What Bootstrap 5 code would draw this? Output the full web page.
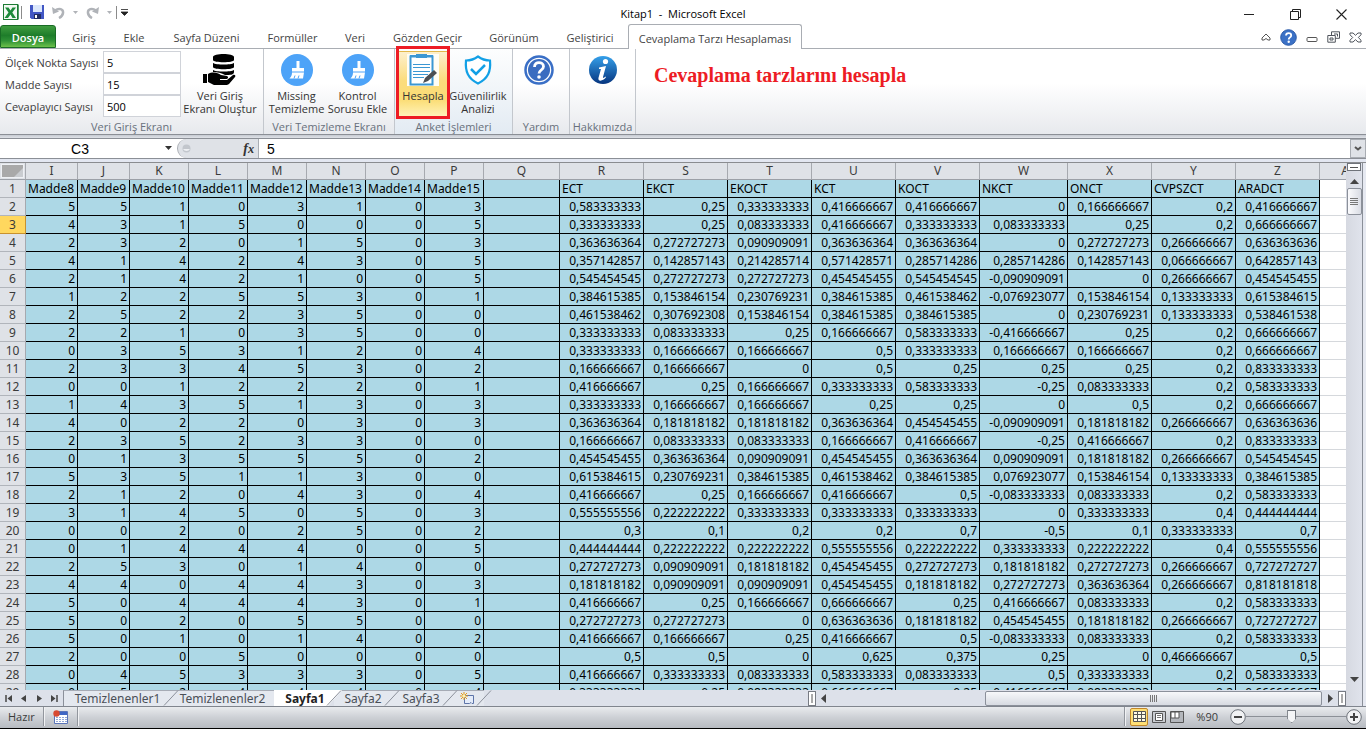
<!DOCTYPE html>
<html lang="tr">
<head>
<meta charset="utf-8">
<meta name="viewport" content="width=device-width, initial-scale=1">
<title>Kitap1 - Microsoft Excel</title>
<link href="https://cdn.jsdelivr.net/npm/bootstrap@5.3.0/dist/css/bootstrap.min.css" rel="stylesheet">
<style>
  body { font-family: "Open Sans", "Noto Sans", sans-serif; font-size: 11px; line-height: 13px; color: #3c3c3c; background: #fff; }
  button { border: 0; background: none; padding: 0; color: inherit; font: inherit; white-space: nowrap; }
  svg { display: block; flex: none; }
  input { min-width: 0; }

  .title-bar { height: 24px; padding-left: 3px; }
  .title-text { font-size: 11px; padding-top: 2px; color: #000; white-space: pre; }
  .window-buttons { padding-right: 19px; padding-top: 4px; gap: 35px; }
  .vline { width: 1px; height: 13px; background: #8b8b8b; }

  .ribbon-tabs { height: 25px; border-bottom: 1px solid #a9adb3; }
  .ribbon-tabs .tab { height: 24px; padding-top: 2px; color: #444; text-align: center; }
  .ribbon-tabs .tab-file { width: 56px; margin-right: 3px; height: 23px; align-self: flex-end; color: #fff; font-weight: 600;
    background: linear-gradient(#3f9c3f, #1e7d2a 45%, #2f9136 70%, #6cc04a); border: 1px solid #196b25; border-radius: 3px 3px 0 0; }
  .w-1 { width: 50px; } .w-2 { width: 50px; } .w-3 { width: 95px; } .w-4 { width: 77px; } .w-5 { width: 48px; }
  .w-6 { width: 97px; } .w-7 { width: 76px; } .w-8 { width: 76px; }
  .ribbon-tabs .tab-active { width: 174px; height: 25px; margin-bottom: -1px; background: #fff; border: 1px solid #a9adb3; border-bottom: 0; border-radius: 3px 3px 0 0; }
  .tab-tools { gap: 9px; padding-right: 4px; padding-top: 2px; }

  .ribbon { height: 86px; background: linear-gradient(#fff 0, #fff 40%, #e7e9ed 100%); border-bottom: 1px solid #8b8f96; }
  .group { border-right: 1px solid #c3c7cd; padding-top: 2px; }
  .group-1 { width: 264px; } .group-2 { width: 131px; } .group-3 { width: 118px; background: linear-gradient(#fdfefe, #e3ebf3); }
  .group-4 { width: 57px; } .group-5 { width: 66px; }
  .group-4 .big-button { padding-right: 4px; }
  .group-2 .buttons { padding-left: 2px; }
  .group-3 .buttons { padding-left: 2px; }
  .group-label { color: #68707c; text-align: center; height: 14px; white-space: nowrap; }
  .field-label { width: 98px; margin-left: 5px; white-space: nowrap; }
  .field-box { width: 78px; height: 22px; border: 1px solid #d0d3d9; border-radius: 0; padding: 0 3px; background: #fff; color: #000; font-size: 11px; }
  .big-button { display: flex; flex-direction: column; align-items: center; gap: 3px; padding-top: 3px; height: 66px; min-width: 0; color: #333; }
  .big-button .cap { display: block; }
  .bw-1 { width: 78px; } .bw-2 { width: 61px; } .bw-3 { width: 52px; } .bw-4 { width: 58px; }
  .hot { background: linear-gradient(#fdf0cd, #fbdc7c 45%, #fbdd76 75%, #fff3b8); border: 1px solid #e2b84b; border-radius: 2px; padding-top: 2px; }
  .callout { position: absolute; left: 1px; top: -3px; width: 54px; height: 73px; border: 3px solid #ed1c24; pointer-events: none; }
  .note { font-family: "Liberation Serif", serif; font-weight: bold; font-size: 20px; line-height: 24px; color: #ed1c24; padding: 14px 0 0 18px; }

  .strip { height: 4px; background: linear-gradient(#c6cad1, #dfe2e8); border-bottom: 1px solid #8b8f96; }
  .formula-bar { height: 20px; border-bottom: 1px solid #8b8f96; background: #fff; font-family: "Liberation Sans", sans-serif; font-size: 14px; }
  .formula-bar input { border: 0; padding: 0; color: #000; font-size: 14px; line-height: 18px; background: transparent; }
  .name-box { width: 160px; text-align: center; }
  .fx-area { width: 82px; background: #dfe2e7; border: 1px solid #a9adb3; border-width: 0 1px 0 1px; border-radius: 10px 0 0 10px; }
  .fx { font-family: "Liberation Serif", serif; font-style: italic; font-weight: bold; font-size: 14px; color: #333; }
  .expand { width: 16px; background: #dfe2e7; border: 1px solid #a9adb3; }
  .strip-2 { height: 4px; background: #e3e7f1; border-bottom: 1px solid #8a8c90; }

  .sheet { background: #fff; }
  .grid-table { table-layout: fixed; border-collapse: separate; border-spacing: 0; width: 1379px; font-family: "Noto Sans", sans-serif; font-size: 12px; line-height: 17px; color: #000; }
  .grid-table th { font-weight: normal; background: #dfe2e7; color: #3a3a3a; text-align: center; padding: 0; height: 18px; border-right: 1px solid #a6a9af; border-bottom: 1px solid #b1b5bb; }
  .grid-table thead th { height: 17px; line-height: 16px; border-bottom: 1px solid #9ca0a7; }
  .grid-table td { height: 18px; padding: 0 2px; text-align: right; white-space: nowrap; background: #add8e6; border-right: 1px solid #000; border-bottom: 1px solid #000; }
  .grid-table .heads td { text-align: left; }
  .grid-table td.blank { background: #fff; border-color: #d5d8dc; }
  .grid-table th.current { background: #ffd75e; border-color: #c8912d; }
  .corner { display: flex; justify-content: flex-end; align-items: flex-end; margin: 1px; height: 14px; background: #a9a9a9; border: 1px solid #eef0f4; }
  .c-head { width: 26px; } .c-52 { width: 52px; } .c-59 { width: 59px; } .c-76 { width: 76px; } .c-84 { width: 84px; } .c-88 { width: 88px; }

  .v-scroll { width: 17px; background: linear-gradient(90deg, #d6d9e1, #e0e3ec); border-right: 1px solid #8a8f98; margin-right: 3px; }
  .side { background: #e6e9f1; }
  .split-box { width: 14px; height: 8px; border: 1px solid #6f737a; background: #fff; }
  .v-thumb { width: 15px; height: 27px; border: 1px solid #8b909a; border-radius: 2px; background: linear-gradient(90deg, #fbfbfd, #d9dce4); }

  .bottom-bar { height: 16px; background: #dde1ea; }
  .sheet-nav { width: 63px; padding: 0 5px; }
  .sheet-tabs button { height: 16px; background: #e4e8ef; line-height: 15px; color: #4a4f57; font-size: 12px; font-family: "Noto Sans", sans-serif; border-top: 1px solid #a6abb5; text-align: center; }
  .sheet-tabs .slash { margin: 0 -8px; position: relative; }
  .st-1 { width: 108px; border-left: 1px solid #8b909a; } .st-2 { width: 103px; } .st-3 { width: 58px; } .st-4 { width: 34px; }
  .sheet-tabs .st-on { width: 68px; margin-right: -8px; padding-right: 6px; background: #fff; border-top-color: #fff; font-weight: bold; color: #222; clip-path: polygon(0 0, 100% 0, calc(100% - 14px) 100%, 0 100%); }
  .h-scroll { width: 538px; }
  .grip { width: 8px; height: 15px; background: #fff; border: 1px solid #777b83; }
  .h-thumb { height: 15px; width: 337px; border: 1px solid #8b909a; border-radius: 2px; background: linear-gradient(#f7f8fa, #d7dbe2); }

  .status { height: 23px; padding-bottom: 2px; border-top: 1px solid #80858e; border-bottom: 1px solid #000; background: linear-gradient(#e9ebee, #cdd0d5 50%, #b7bbc1); }
  .status .sep { width: 2px; align-self: stretch; background: #92969d; border-right: 1px solid #f1f2f4; }
  .view-on { width: 18px; height: 18px; border: 1px solid #c2872a; border-radius: 2px; background: #fedf75; }
  .zoom-range { appearance: none; width: 100px; height: 16px; margin: 0; background: linear-gradient(#8c9097, #8c9097) center / 100% 1px no-repeat; }
  .zoom-range::-webkit-slider-thumb { appearance: none; width: 9px; height: 13px; background: #6f747c; clip-path: polygon(0 0, 100% 0, 100% 65%, 50% 100%, 0 65%); box-shadow: inset 0 0 0 1px #6f747c, inset 0 0 0 8px #f4f5f7; }
</style>
</head>
<body>
<div class="d-flex flex-column vh-100 overflow-hidden">

  <header class="title-bar d-flex flex-shrink-0 align-items-center position-relative">
    <svg width="18" height="18" viewBox="0 0 18 18"><rect x=".5" y="1.5" width="14" height="15" fill="#f3faf3" stroke="#1d7c34"/><path d="M2 4.500h3.500l2 3 2-3H13L9.300 9.500l3.700 5.500H9.500l-2-3.500L5 15H1.500L5.500 9.500z" fill="#1e8b3b"/><path d="M15 1.500v15" stroke="#1d7c34" stroke-width="1.500"/></svg>
    <span class="vline"></span>
    <button class="ms-2" aria-label="Kaydet"><svg width="14" height="14" viewBox="0 0 14 14"><path d="M0 0h14v14H1.500L0 12.500z" fill="#4257c4"/><path d="M3 0h9v7H3z" fill="#dbe7fb"/><path d="M4 9h7v5H4z" fill="#222d63"/><path d="M5 10h2v3H5z" fill="#fff"/></svg></button>
    <button class="ms-2 d-flex align-items-center gap-2" aria-label="Geri al"><svg width="13" height="13" viewBox="0 0 13 13"><path d="M3 4.500C7 1.500 11.500 3 11 7c-.3 2.500-2 4-4 5" fill="none" stroke="#b0b3b8" stroke-width="2.500"/><path d="M0 1l1 7 6-2.500z" fill="#b0b3b8"/></svg><svg width="5" height="3" viewBox="0 0 5 3"><path d="M0 0h5L2.500 3z" fill="#b0b3b8"/></svg></button>
    <button class="ms-2 d-flex align-items-center gap-2" aria-label="Yinele"><svg width="13" height="13" viewBox="0 0 13 13"><path d="M10 4.500C6 1.500 1.500 3 2 7c.3 2.500 2 4 4 5" fill="none" stroke="#b0b3b8" stroke-width="2.500"/><path d="M13 1l-1 7-6-2.500z" fill="#b0b3b8"/></svg><svg width="5" height="3" viewBox="0 0 5 3"><path d="M0 0h5L2.500 3z" fill="#b0b3b8"/></svg></button>
    <span class="vline ms-1"></span>
    <button class="ms-1" aria-label="Özelleştir"><svg width="7" height="7" viewBox="0 0 7 7"><path d="M0 .5h7M0 3h7L3.500 6.500z" fill="#222" stroke="#222" stroke-width=".8"/></svg></button>
    <div class="title-text position-absolute start-50 translate-middle-x">Kitap1  -  Microsoft Excel</div>
    <div class="window-buttons d-flex align-items-center ms-auto">
      <button aria-label="Simge durumuna küçült"><svg width="11" height="11" viewBox="0 0 11 11"><path d="M0 5.500h10" stroke="#222"/></svg></button>
      <button aria-label="Önceki boyut"><svg width="11" height="11" viewBox="0 0 11 11"><path d="M.5 2.500h8v8h-8zM2.500 2.500v-2h8v8h-2" fill="none" stroke="#222"/></svg></button>
      <button aria-label="Kapat"><svg width="11" height="11" viewBox="0 0 11 11"><path d="M.5.5l10 10M10.500.5l-10 10" stroke="#222" stroke-width="1.100"/></svg></button>
    </div>
  </header>

  <nav class="ribbon-tabs d-flex flex-shrink-0">
    <button class="tab tab-file">Dosya</button>
    <button class="tab w-1">Giriş</button>
    <button class="tab w-2">Ekle</button>
    <button class="tab w-3">Sayfa Düzeni</button>
    <button class="tab w-4">Formüller</button>
    <button class="tab w-5">Veri</button>
    <button class="tab w-6">Gözden Geçir</button>
    <button class="tab w-7">Görünüm</button>
    <button class="tab w-8">Geliştirici</button>
    <button class="tab tab-active">Cevaplama Tarzı Hesaplaması</button>
    <div class="tab-tools d-flex align-items-center ms-auto">
      <button aria-label="Şeridi küçült"><svg width="10" height="9" viewBox="0 0 10 9"><path d="M1 5L5 1l4 4v2H7L5 5.500 3 7H1z" fill="#fff" stroke="#555"/></svg></button>
      <button aria-label="Yardım"><svg width="17" height="17" viewBox="0 0 17 17"><circle cx="8.500" cy="8.500" r="7.800" fill="#3b71c6" stroke="#2c5ba8"/><path d="M6 6.600c0-3.400 5.200-3.200 5.200-.2 0 2-2.500 2-2.500 4" fill="none" stroke="#fff" stroke-width="1.800"/><circle cx="8.700" cy="12.800" r="1.200" fill="#fff"/></svg></button>
      <button aria-label="Pencereyi küçült"><svg width="12" height="9" viewBox="0 0 12 9"><rect x="1" y="4.500" width="10" height="4" rx="1" fill="#fff" stroke="#555"/></svg></button>
      <button aria-label="Pencereyi geri yükle"><svg width="13" height="12" viewBox="0 0 13 12"><path d="M4.500.8h8v6.500h-8zM7 3h3.500v2.500" fill="#fff" stroke="#4f545c"/><path d="M.8 4.500h7.500v6.700H.8z" fill="#fff" stroke="#4f545c"/><path d="M3 7h3v2H3z" fill="none" stroke="#4f545c"/></svg></button>
      <button aria-label="Pencereyi kapat"><svg width="13" height="11" viewBox="0 0 13 11"><path d="M1 1h3l2.500 2.300L9 1h3v1.800L9.300 5.500 12 8.200V10H9L6.500 7.700 4 10H1V8.200l2.700-2.700L1 2.800z" fill="#fff" stroke="#4f545c"/></svg></button>
    </div>
  </nav>

  <section class="ribbon d-flex flex-shrink-0">
    <div class="group group-1 d-flex flex-column">
      <div class="d-flex flex-grow-1">
        <div>
          <div class="d-flex align-items-center"><label class="field-label" for="olcek">Ölçek Nokta Sayısı</label><input class="field-box" id="olcek" value="5"></div>
          <div class="d-flex align-items-center"><label class="field-label" for="madde">Madde Sayısı</label><input class="field-box" id="madde" value="15"></div>
          <div class="d-flex align-items-center"><label class="field-label" for="cevap">Cevaplayıcı Sayısı</label><input class="field-box" id="cevap" value="500"></div>
        </div>
        <button class="big-button bw-1"><svg width="34" height="32" viewBox="0 0 34 32"><g fill="#000"><path d="M10 3c0-4 21-4 21 0v3c0 3-21 3-21 0zM10 9c3 2 18 2 21 0v4c0 3-21 3-21 0zM10 16c3 2 18 2 21 0v2c0 3-4 3-9 3-3-2-8-3-12-3z"/><path d="M5 20c5-3 10-1 13 1l6 1c2 1 1 3-1 3h-6v1h7l6-5c2-1 3 1 2 2l-6 7c-1 1-3 1-5 1H11l-6-3z"/><path d="M0 20h4v9H0z"/></g></svg><span class="cap">Veri Giriş<br>Ekranı Oluştur</span></button>
      </div>
      <div class="group-label">Veri Giriş Ekranı</div>
    </div>
    <div class="group group-2 d-flex flex-column">
      <div class="buttons d-flex flex-grow-1">
        <button class="big-button bw-2"><svg width="32" height="32" viewBox="0 0 32 32"><circle cx="16" cy="16" r="16" fill="#4da3f8"/><path d="M15.500 7h3v7H23v3.500H11V14h4.500zM11 18.500h12l-1 6H8.500c2-2 2.500-4 2.500-6z" fill="#fff"/><path d="M13 24.500l1-3M17 24.500l1-3" stroke="#4da3f8"/></svg><span class="cap">Missing<br>Temizleme</span></button>
        <button class="big-button bw-2"><svg width="32" height="32" viewBox="0 0 32 32"><circle cx="16" cy="16" r="16" fill="#4da3f8"/><path d="M15.500 7h3v7H23v3.500H11V14h4.500zM11 18.500h12l-1 6H8.500c2-2 2.500-4 2.500-6z" fill="#fff"/><path d="M13 24.500l1-3M17 24.500l1-3" stroke="#4da3f8"/></svg><span class="cap">Kontrol<br>Sorusu Ekle</span></button>
      </div>
      <div class="group-label">Veri Temizleme Ekranı</div>
    </div>
    <div class="group group-3 d-flex flex-column position-relative">
      <div class="buttons d-flex flex-grow-1">
        <button class="big-button bw-3 hot"><svg width="32" height="32" viewBox="0 0 32 32"><path d="M0 0h32v32H0z" fill="#fffdf5"/><path d="M3.500 2.500h22v28h-22z" fill="#fff" stroke="#3b97d3" stroke-width="2"/><path d="M9 0h11v4H9zM3 1h23v2H3z" fill="#3b97d3"/><path d="M6 10.500h17M6 13.500h17M6 17.500h17M6 20.500h15M6 23.500h11" stroke="#3b97d3"/><path d="M16 29l2-5 9-8 3 3-9 8z" fill="#4b4f54"/></svg><span class="cap">Hesapla</span></button>
        <button class="big-button bw-4"><svg width="32" height="32" viewBox="0 0 32 32"><path d="M16 2.500c4 3 8 4 12 4 1 11-2 18-12 23C6 24.500 3 17.500 4 6.500c4 0 8-1 12-4z" fill="#fff" stroke="#12a0e6" stroke-width="2.200"/><path d="M9 15l5 5 9-9" fill="none" stroke="#12a0e6" stroke-width="2.500"/></svg><span class="cap">Güvenilirlik<br>Analizi</span></button>
      </div>
      <div class="group-label">Anket İşlemleri</div>
      <span class="callout"></span>
    </div>
    <div class="group group-4 d-flex flex-column">
      <button class="big-button flex-grow-1" aria-label="Yardım"><svg width="32" height="32" viewBox="0 0 32 32"><circle cx="16" cy="16" r="13.500" fill="#fff" stroke="#3a6fc6" stroke-width="2.500"/><circle cx="16" cy="16" r="11" fill="#3a6cc0"/><path d="M11.500 13c0-6 9-5.500 9-.5 0 3.500-4.500 3.500-4.500 7" fill="none" stroke="#fff" stroke-width="2.800"/><circle cx="16" cy="23" r="1.800" fill="#fff"/></svg></button>
      <div class="group-label">Yardım</div>
    </div>
    <div class="group group-5 d-flex flex-column">
      <button class="big-button flex-grow-1" aria-label="Hakkımızda"><svg width="32" height="32" viewBox="0 0 32 32"><defs><linearGradient id="info" x2="0" y2="1"><stop stop-color="#35a0ea"/><stop offset="1" stop-color="#06357f"/></linearGradient></defs><circle cx="16" cy="16" r="14" fill="url(#info)"/><circle cx="18.500" cy="7.500" r="2.600" fill="#fff"/><path d="M12 13.500l7-1.500-3 11c0 1.500 1 1 2.500-.5l.5.800c-3 4.200-8.500 4.500-7.500.5L14 15h-2z" fill="#fff"/></svg></button>
      <div class="group-label">Hakkımızda</div>
    </div>
    <div class="note text-nowrap">Cevaplama tarzlarını hesapla</div>
  </section>
  <div class="strip flex-shrink-0"></div>

  <div class="formula-bar d-flex flex-shrink-0">
    <input class="name-box" value="C3" aria-label="Ad kutusu">
    <button class="px-1" aria-label="Ad listesi"><svg width="9" height="5" viewBox="0 0 9 5"><path d="M1 0h7L4.500 4z" fill="#333"/></svg></button>
    <div class="fx-area d-flex align-items-center justify-content-between ps-1 pe-1">
      <svg width="9" height="9" viewBox="0 0 9 9"><circle cx="4.500" cy="4.500" r="4" fill="#c2c6cc"/><path d="M1 5h7a4 4 0 0 1-7 0" fill="#eef0f3"/></svg>
      <button class="fx" aria-label="İşlev ekle">f<small>x</small></button>
    </div>
    <input class="flex-grow-1 ps-2" value="5" aria-label="Formül çubuğu">
    <button class="expand d-flex align-items-center justify-content-center" aria-label="Formül çubuğunu genişlet"><svg width="8" height="5" viewBox="0 0 8 5"><path d="M1 1l3 2.500L7 1" fill="none" stroke="#555" stroke-width="2"/></svg></button>
  </div>
  <div class="strip-2 flex-shrink-0"></div>

  <main class="sheet d-flex flex-grow-1 overflow-hidden">
    <div class="flex-grow-1 overflow-hidden">
      <table class="grid-table">
        <colgroup>
          <col class="c-head"><col class="c-52"><col class="c-52"><col class="c-59"><col class="c-59"><col class="c-59"><col class="c-59"><col class="c-59"><col class="c-59"><col class="c-76"><col class="c-84"><col class="c-84"><col class="c-84"><col class="c-84"><col class="c-84"><col class="c-88"><col class="c-84"><col class="c-84"><col class="c-84"><col class="c-59">
        </colgroup>
        <thead><tr id="letters"></tr></thead>
        <tbody id="rows"></tbody>
      </table>
    </div>
    <div class="side d-flex flex-shrink-0">
      <div class="v-scroll d-flex flex-column align-items-center">
        <div class="split-box d-flex align-items-center justify-content-center"><svg width="8" height="3"><path d="M0 1.500h8" stroke="#555"/></svg></div>
        <button class="mt-2 mb-1" aria-label="Yukarı kaydır"><svg width="9" height="5" viewBox="0 0 9 5"><path d="M0 5h9L4.500 0z" fill="#444"/></svg></button>
        <div class="v-thumb d-flex align-items-center justify-content-center"><svg width="8" height="8"><path d="M0 .5h8M0 2.500h8M0 4.500h8M0 6.500h8" stroke="#777"/></svg></div>
        <button class="mt-auto mb-2" aria-label="Aşağı kaydır"><svg width="9" height="5" viewBox="0 0 9 5"><path d="M0 0h9L4.500 5z" fill="#444"/></svg></button>
      </div>
    </div>
  </main>

  <div class="bottom-bar d-flex flex-shrink-0">
    <div class="sheet-nav d-flex align-items-center justify-content-between">
      <button aria-label="İlk sayfa"><svg width="8" height="7"><path d="M1 0v7" stroke="#444" stroke-width="1.500"/><path d="M7 0v7L2.500 3.500z" fill="#444"/></svg></button>
      <button aria-label="Önceki sayfa"><svg width="6" height="7"><path d="M5 0v7L0 3.500z" fill="#444"/></svg></button>
      <button aria-label="Sonraki sayfa"><svg width="6" height="7"><path d="M1 0v7l5-3.500z" fill="#444"/></svg></button>
      <button aria-label="Son sayfa"><svg width="8" height="7"><path d="M7 0v7" stroke="#444" stroke-width="1.500"/><path d="M1 0v7l4.500-3.500z" fill="#444"/></svg></button>
    </div>
    <div class="sheet-tabs d-flex">
      <button class="st-1">Temizlenenler1</button>
      <svg class="slash" width="16" height="16"><path d="M1 15.500L15 .5" stroke="#8b909a"/></svg>
      <button class="st-2">Temizlenenler2</button>
      <button class="st-on">Sayfa1</button>
      <svg class="slash" width="16" height="16"><path d="M1 15.500L15 .5" stroke="#8b909a"/></svg>
      <button class="st-3">Sayfa2</button>
      <svg class="slash" width="16" height="16"><path d="M1 15.500L15 .5" stroke="#8b909a"/></svg>
      <button class="st-3">Sayfa3</button>
      <svg class="slash" width="16" height="16"><path d="M1 15.500L15 .5" stroke="#8b909a"/></svg>
      <button class="st-4 d-flex justify-content-center align-items-center" aria-label="Sayfa ekle"><svg width="15" height="13" viewBox="0 0 15 13"><path d="M4.500 3.500h9v8H12l-1-1-1.500 1h-5z" fill="#e4ecfa" stroke="#5d74a8"/><path d="M4 0v8M0 4h8M1 1l6 6M7 1L1 7" stroke="#e39a1d"/><circle cx="4" cy="4" r="1.500" fill="#fff3b0"/></svg></button>
      <svg class="slash" width="16" height="16"><path d="M1 15.500L15 .5" stroke="#8b909a"/></svg>
    </div>
    <div class="h-scroll d-flex align-items-center ms-auto">
      <span class="grip d-flex justify-content-center align-items-center"><svg width="2" height="9"><path d="M1 0v9" stroke="#555"/></svg></span>
      <button class="ms-1" aria-label="Sola kaydır"><svg width="6" height="9"><path d="M6 0v9L1 4.500z" fill="#444"/></svg></button>
      <div class="h-thumb ms-auto d-flex align-items-center justify-content-center"><svg width="8" height="7"><path d="M.5 0v7M2.500 0v7M4.500 0v7M6.500 0v7" stroke="#777"/></svg></div>
      <button class="mx-1" aria-label="Sağa kaydır"><svg width="8" height="9"><path d="M2 0v9l5-4.500z" fill="#444"/></svg></button>
      <span class="grip d-flex justify-content-center align-items-center"><svg width="2" height="9"><path d="M1 0v9" stroke="#555"/></svg></span>
    </div>
    <div class="side d-flex flex-shrink-0"><div class="v-scroll"></div></div>
  </div>

  <footer class="status d-flex align-items-center flex-shrink-0">
    <span class="ps-2 pe-2">Hazır</span>
    <span class="sep"></span>
    <button class="mx-2" aria-label="Makro kaydet"><svg width="16" height="14" viewBox="0 0 16 14"><path d="M1.500 1.500h13v12h-13z" fill="#fff" stroke="#5a74b8"/><path d="M2 2h12v3H2z" fill="#3f66c4"/><path d="M3 7.500h11M3 9.500h11M3 11.500h11" stroke="#91a7d8" stroke-dasharray="2 1"/><circle cx="3.500" cy="3.500" r="3.200" fill="#d84a32"/></svg></button>
    <span class="sep"></span>
    <span class="sep ms-auto"></span>
    <div class="d-flex align-items-center ms-1">
      <button class="view-on d-flex align-items-center justify-content-center" aria-label="Normal"><svg width="13" height="11" viewBox="0 0 13 11"><path d="M.5.5h12v10H.5zM.5 3.500h12M.5 7.500h12M4.500 0v11M8.500 0v11" fill="#fffbe6" stroke="#555"/></svg></button>
      <button class="ms-1" aria-label="Sayfa düzeni"><svg width="14" height="12" viewBox="0 0 14 12"><path d="M.5.5h13v11H.5z" fill="#c9ccd1" stroke="#555"/><path d="M3.500 2.500h7v7h-7z" fill="#fff" stroke="#555"/><path d="M5 4.500h4M5 6.500h4" stroke="#777"/></svg></button>
      <button class="ms-1" aria-label="Sayfa sonu önizleme"><svg width="14" height="12" viewBox="0 0 14 12"><path d="M.5.5h13v11H.5z" fill="#b4b7bc" stroke="#555"/><path d="M1 1h8v6H1zM5 1v6" fill="#fff" stroke="#555"/></svg></button>
      <label class="ms-2 px-1" for="zoom">%90</label>
      <button class="ms-2" aria-label="Uzaklaştır"><svg width="16" height="16"><circle cx="8" cy="8" r="7.300" fill="#f1f2f4" stroke="#6b7078"/><path d="M4 8h8" stroke="#444" stroke-width="2"/></svg></button>
      <input class="zoom-range" id="zoom" type="range" min="10" max="180" value="87">
      <button class="me-1" aria-label="Yakınlaştır"><svg width="16" height="16"><circle cx="8" cy="8" r="7.300" fill="#f1f2f4" stroke="#6b7078"/><path d="M4 8h8M8 4v8" stroke="#444" stroke-width="2"/></svg></button>
    </div>
  </footer>
</div>

<script>
  // Each line is one sheet row, columns I..P | R..Z; column Q is empty.
  const data = `5 5 1 0 3 1 0 3|0,583333333 0,25 0,333333333 0,416666667 0,416666667 0 0,166666667 0,2 0,416666667
4 3 1 5 0 0 0 5|0,333333333 0,25 0,083333333 0,416666667 0,333333333 0,083333333 0,25 0,2 0,666666667
2 3 2 0 1 5 0 3|0,363636364 0,272727273 0,090909091 0,363636364 0,363636364 0 0,272727273 0,266666667 0,636363636
4 1 4 2 4 3 0 5|0,357142857 0,142857143 0,214285714 0,571428571 0,285714286 0,285714286 0,142857143 0,066666667 0,642857143
2 1 4 2 1 0 0 5|0,545454545 0,272727273 0,272727273 0,454545455 0,545454545 -0,090909091 0 0,266666667 0,454545455
1 2 2 5 5 3 0 1|0,384615385 0,153846154 0,230769231 0,384615385 0,461538462 -0,076923077 0,153846154 0,133333333 0,615384615
2 5 2 2 3 5 0 0|0,461538462 0,307692308 0,153846154 0,384615385 0,384615385 0 0,230769231 0,133333333 0,538461538
2 2 1 0 3 5 0 0|0,333333333 0,083333333 0,25 0,166666667 0,583333333 -0,416666667 0,25 0,2 0,666666667
0 3 5 3 1 2 0 4|0,333333333 0,166666667 0,166666667 0,5 0,333333333 0,166666667 0,166666667 0,2 0,666666667
2 3 3 4 5 3 0 2|0,166666667 0,166666667 0 0,5 0,25 0,25 0,25 0,2 0,833333333
0 0 1 2 2 2 0 1|0,416666667 0,25 0,166666667 0,333333333 0,583333333 -0,25 0,083333333 0,2 0,583333333
1 4 3 5 1 3 0 3|0,333333333 0,166666667 0,166666667 0,25 0,25 0 0,5 0,2 0,666666667
4 0 2 2 0 3 0 3|0,363636364 0,181818182 0,181818182 0,363636364 0,454545455 -0,090909091 0,181818182 0,266666667 0,636363636
2 3 5 2 3 3 0 0|0,166666667 0,083333333 0,083333333 0,166666667 0,416666667 -0,25 0,416666667 0,2 0,833333333
0 1 3 5 5 5 0 2|0,454545455 0,363636364 0,090909091 0,454545455 0,363636364 0,090909091 0,181818182 0,266666667 0,545454545
5 3 5 1 1 3 0 0|0,615384615 0,230769231 0,384615385 0,461538462 0,384615385 0,076923077 0,153846154 0,133333333 0,384615385
2 1 2 0 4 3 0 4|0,416666667 0,25 0,166666667 0,416666667 0,5 -0,083333333 0,083333333 0,2 0,583333333
3 1 4 5 0 5 0 3|0,555555556 0,222222222 0,333333333 0,333333333 0,333333333 0 0,333333333 0,4 0,444444444
0 0 2 0 2 5 0 2|0,3 0,1 0,2 0,2 0,7 -0,5 0,1 0,333333333 0,7
0 1 4 4 4 0 0 5|0,444444444 0,222222222 0,222222222 0,555555556 0,222222222 0,333333333 0,222222222 0,4 0,555555556
2 5 3 0 1 4 0 0|0,272727273 0,090909091 0,181818182 0,454545455 0,272727273 0,181818182 0,272727273 0,266666667 0,727272727
4 4 0 4 4 3 0 3|0,181818182 0,090909091 0,090909091 0,454545455 0,181818182 0,272727273 0,363636364 0,266666667 0,818181818
5 0 4 4 4 3 0 1|0,416666667 0,25 0,166666667 0,666666667 0,25 0,416666667 0,083333333 0,2 0,583333333
5 0 2 0 5 5 0 0|0,272727273 0,272727273 0 0,636363636 0,181818182 0,454545455 0,181818182 0,266666667 0,727272727
5 0 1 0 1 4 0 2|0,416666667 0,166666667 0,25 0,416666667 0,5 -0,083333333 0,083333333 0,2 0,583333333
2 0 0 5 0 0 0 0|0,5 0,5 0 0,625 0,375 0,25 0 0,466666667 0,5
0 4 5 3 3 3 0 5|0,416666667 0,333333333 0,083333333 0,583333333 0,083333333 0,5 0,333333333 0,2 0,583333333
0 5 2 4 4 4 0 4|0,333333333 0,25 0,083333333 0,666666667 0,25 0,416666667 0,083333333 0,2 0,666666667`;
  const corner = '<th><div class="corner"><svg width="9" height="9"><path d="M9 0v9H0z" fill="#c9ccd0"/></svg></div></th>';
  document.getElementById('letters').innerHTML = corner +
    [...'IJKLMNOPQRSTUVWXYZ', 'AA'].map(c => `<th scope="col">${c}</th>`).join('');
  const heads = ['Madde8', 'Madde9', 'Madde10', 'Madde11', 'Madde12', 'Madde13', 'Madde14', 'Madde15', '', 'ECT', 'EKCT', 'EKOCT', 'KCT', 'KOCT', 'NKCT', 'ONCT', 'CVPSZCT', 'ARADCT'];
  const line = (n, cells) => `<tr class="${n === 1 ? 'heads' : ''}"><th scope="row" class="${n === 3 ? 'current' : ''}">${n}</th>` +
    cells.map(c => `<td>${c}</td>`).join('') + '<td class="blank"></td></tr>';
  document.getElementById('rows').innerHTML = line(1, heads) +
    data.split('\n').map((r, i) => {
      const [left, right] = r.split('|');
      return line(i + 2, [...left.split(' '), '', ...right.split(' ')]);
    }).join('');
</script>
<script src="https://cdn.jsdelivr.net/npm/bootstrap@5.3.0/dist/js/bootstrap.bundle.min.js"></script>
</body>
</html>
